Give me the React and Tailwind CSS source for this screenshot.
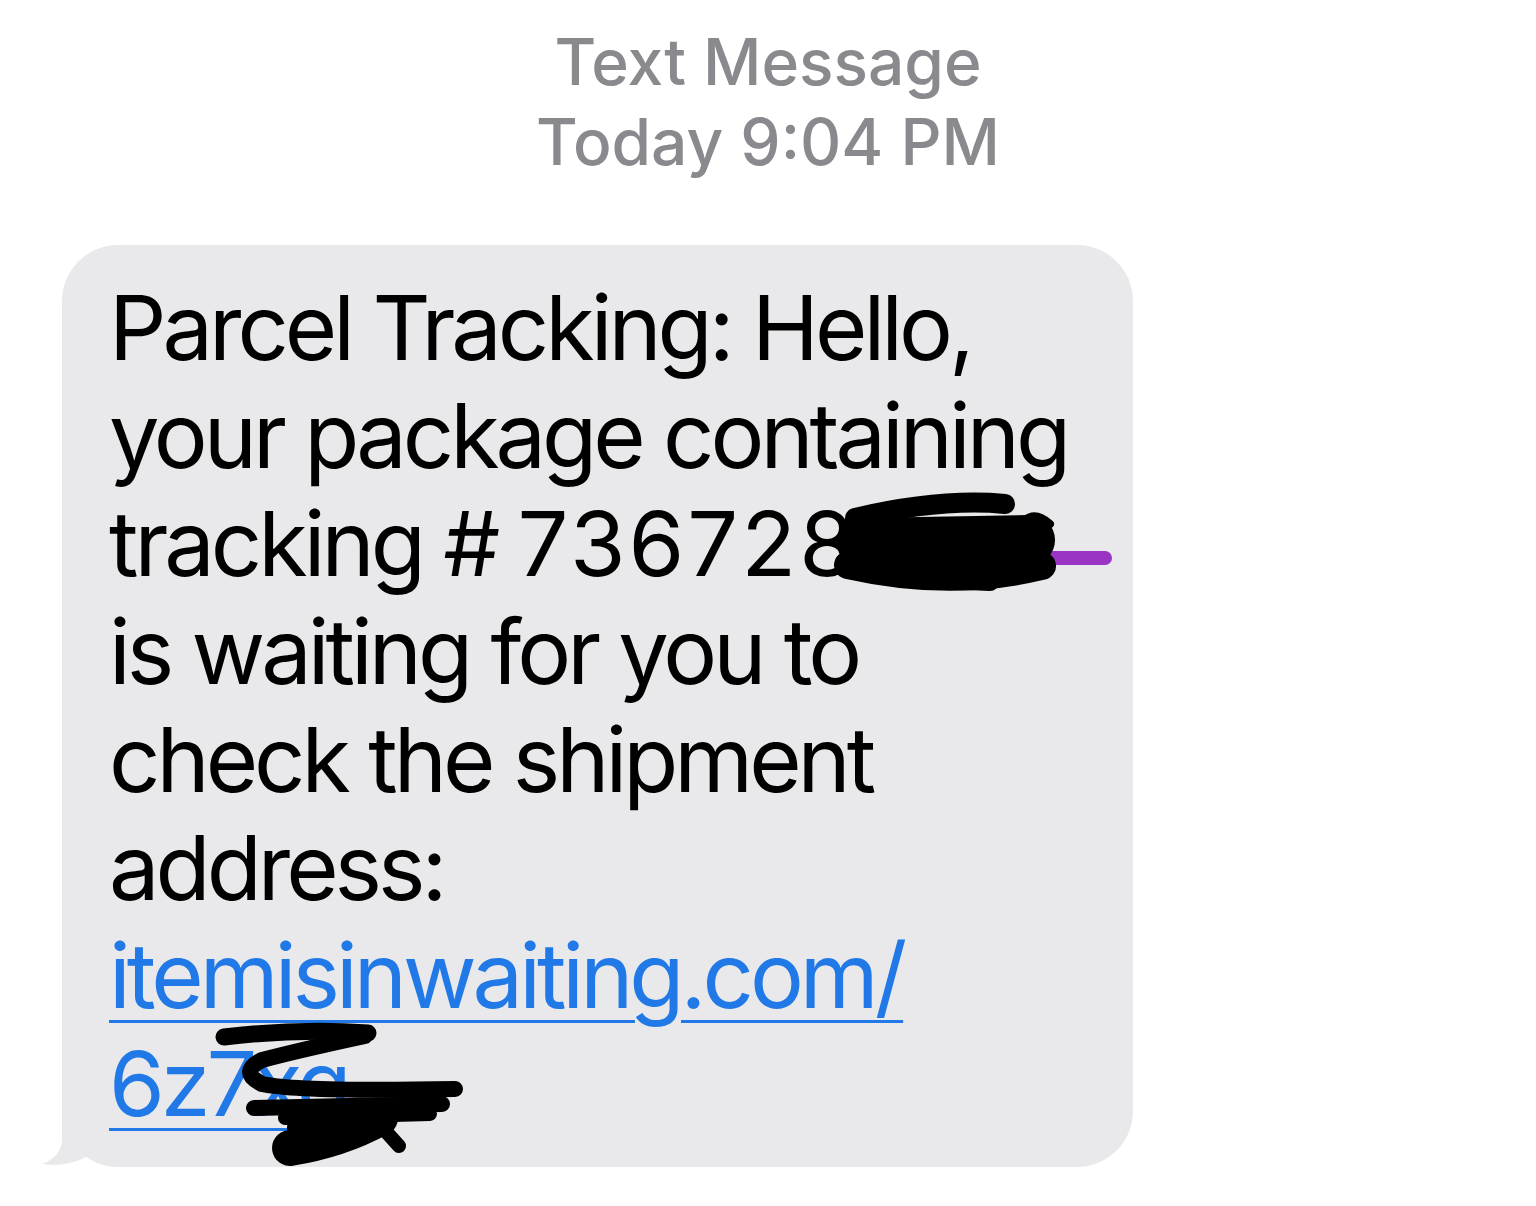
import React from "react";

export default function App() {
  return (
    <div
      className="relative w-[1536px] h-[1206px] bg-white overflow-hidden"
      style={{ fontFamily: "Inter, 'Noto Sans', sans-serif" }}
    >
      <div className="flex flex-col items-center pt-[22px] text-[64px] leading-[80px] font-medium text-[#8a8a8e]">
        <div>Text Message</div>
        <div>Today 9:04 PM</div>
      </div>

      <div className="relative ml-[62px] mt-[63px] w-[1071px] rounded-[56px] bg-[#e9e9eb] pl-[47px] pt-[29px] pb-[29px] text-[90px] leading-[108px] text-black tracking-[-4px]">
        <div className="whitespace-nowrap">Parcel Tracking: Hello,</div>
        <div className="whitespace-nowrap">your package containing</div>
        <div className="whitespace-nowrap">
          tracking # <span className="tracking-[3px]">736728</span>
        </div>
        <div className="whitespace-nowrap">is waiting for you to</div>
        <div className="whitespace-nowrap">check the shipment</div>
        <div className="whitespace-nowrap">address:</div>
        <div className="whitespace-nowrap text-[#2079e6] underline decoration-[3px] underline-offset-[12px]">
          itemisinwaiting.com/
        </div>
        <div className="whitespace-nowrap text-[#2079e6] underline decoration-[3px] underline-offset-[12px]">
          6z7xq
        </div>

        <svg
          className="absolute pointer-events-none"
          style={{ left: -62, top: -245 }}
          width="1536"
          height="1206"
          viewBox="0 0 1536 1206"
        >
          {/* tail */}
          <path
            d="M62 1090 L62 1140 Q61 1157 42 1164 Q68 1168 90 1155 L110 1100 Z"
            fill="#e9e9eb"
          />
          {/* redaction 1 */}
          <circle cx="1040" cy="530" r="8" fill="#9a34c4" />
          <path d="M1045 558 L1105 558" stroke="#9a34c4" strokeWidth="14" strokeLinecap="round" fill="none" />
          <g stroke="#000" strokeLinecap="round" strokeLinejoin="round" fill="none">
            <path d="M862 543 L1030 540" strokeWidth="50" />
            <path d="M855 518 Q940 498 1005 504" strokeWidth="20" />
            <path d="M848 565 Q950 588 1042 566" strokeWidth="28" />
            <path d="M846 545 Q844 515 872 512" strokeWidth="14" />
            <path d="M1018 530 Q1030 506 1050 524" strokeWidth="8" />
            <path d="M900 578 L990 582" strokeWidth="18" />
          </g>
          {/* redaction 2 */}
          <g stroke="#000" strokeLinecap="round" strokeLinejoin="round" fill="none">
            <path d="M224 1037 Q300 1028 368 1033" strokeWidth="17" />
            <path d="M365 1036 Q300 1050 262 1060 Q238 1072 262 1084 Q300 1092 455 1089" strokeWidth="16" />
            <path d="M300 1090 L440 1092" strokeWidth="12" />
            <path d="M254 1108 L442 1104" strokeWidth="16" />
            <path d="M285 1118 L430 1114" strokeWidth="14" />
            <path d="M290 1148 Q340 1140 380 1118" strokeWidth="36" />
            <path d="M300 1128 L370 1116" strokeWidth="26" />
            <path d="M372 1116 L399 1146" strokeWidth="14" />
          </g>
        </svg>
      </div>
    </div>
  );
}
